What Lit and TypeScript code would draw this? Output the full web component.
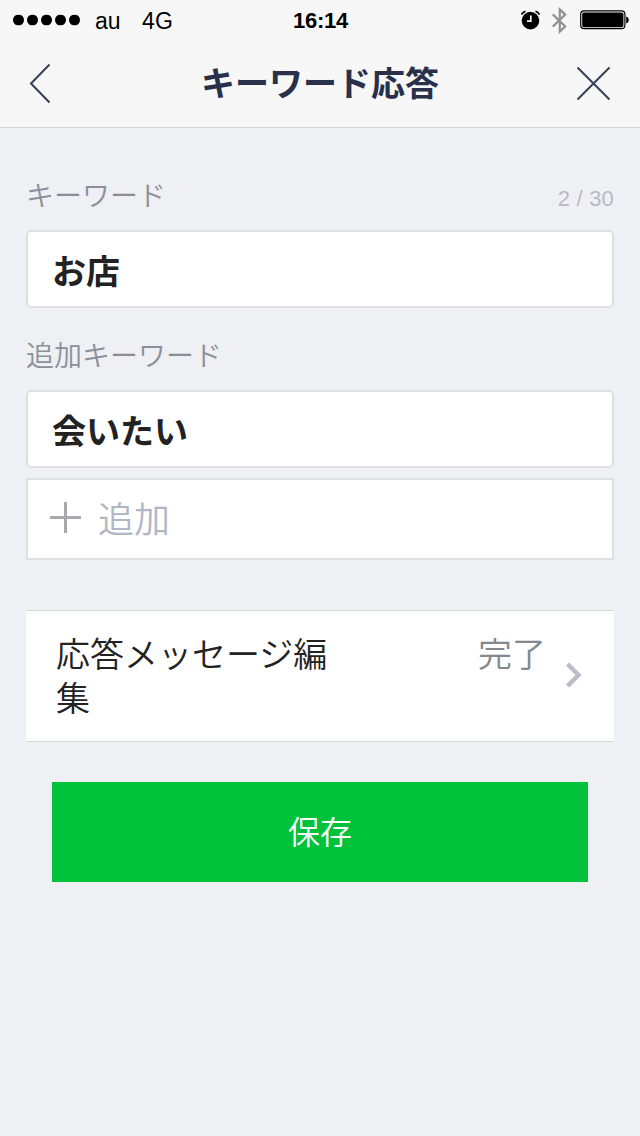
import { LitElement, html, css } from "lit";
import { customElement, property, state } from "lit/decorators.js";

@customElement("status-bar")
class StatusBar extends LitElement {
  static styles = css`
    :host {
      display: grid;
      grid-template-columns: 1fr auto 1fr;
      align-items: center;
      height: 40px;
      padding: 0 11px 0 12px;
      color: #000;
      font-size: 23px;
      line-height: 42px;
    }
    .left { display: flex; align-items: center; }
    .dots { display: block; width: 70px; height: 14px; margin-right: 13px; }
    .carrier { width: 47px; height: 40px; }
    .network { height: 40px; letter-spacing: 0.3px; }
    .time { font-weight: 700; font-size: 22px; letter-spacing: -0.3px; height: 40px; }
    .right { display: flex; justify-content: flex-end; align-items: center; }
    .right svg { display: block; }
    .alarm { margin-right: 11px; }
    .bluetooth { margin-right: 12px; }
  `;
  render() {
    return html`
      <div class="left">
        <svg class="dots" viewBox="0 0 70 14">
          ${[6.5, 20.5, 34.5, 48.5, 62.5].map(
            (x) => html`<svg x=${x - 5.5} y="1.5" width="11" height="11"><circle cx="5.5" cy="5.5" r="5.5" /></svg>`
          )}
        </svg>
        <span class="carrier">au</span>
        <span class="network">4G</span>
      </div>
      <div class="time">16:14</div>
      <div class="right">
        <svg class="alarm" width="19" height="20" viewBox="0 0 19 20">
          <circle cx="9.5" cy="10.6" r="8.8" />
          <path d="M.5 4.6A7 7 0 0 1 4.5 1.2M18.5 4.6A7 7 0 0 0 14.5 1.2" fill="none" stroke="#000" stroke-width="1.6" />
          <path d="M9.8 5.4v5.8H6" fill="none" stroke="#f7f7f7" stroke-width="1.7" />
        </svg>
        <svg class="bluetooth" width="17" height="27" viewBox="0 0 17 27">
          <path d="M1.8 7.4L14.2 19.4 8.8 24.6V2.4L14.2 7.6 1.8 19.6" fill="none" stroke="#929292" stroke-width="2.2" />
        </svg>
        <svg width="49" height="20" viewBox="0 0 49 20">
          <rect x=".7" y=".9" width="44.2" height="17.8" rx="3.4" fill="#f7f7f7" stroke="#000" stroke-width="1.2" />
          <rect x="2.2" y="2.4" width="41.2" height="14.8" rx="1.8" />
          <path d="M46.2 6.5c3.4.7 3.4 6.1 0 6.8z" />
        </svg>
      </div>
    `;
  }
}

@customElement("nav-header")
class NavHeader extends LitElement {
  @property() heading = "";
  static styles = css`
    :host {
      display: flex;
      justify-content: space-between;
      align-items: center;
      box-sizing: border-box;
      height: 88px;
      padding: 0 28px;
      border-bottom: 1px solid #d3d5d9;
      color: #28304a;
    }
    svg { display: block; fill: none; stroke: #354057; stroke-width: 2; }
    .title { margin: 0; font-size: 34px; font-weight: 700; line-height: 50px; }
  `;
  render() {
    return html`
      <svg width="36" height="42" viewBox="0 0 36 42"><path d="M21.5 1.5L3 20.5l18.5 19" /></svg>
      <h1 class="title">${this.heading}</h1>
      <svg width="36" height="36" viewBox="0 0 36 36"><path d="M1.5 1.5l32 32M33.5 1.5l-32 32" /></svg>
    `;
  }
}

@customElement("app-root")
class AppRoot extends LitElement {
  @state() private keyword = "お店";
  @state() private extras = ["会いたい"];
  private limit = 30;

  static styles = css`
    :host {
      display: block;
      box-sizing: border-box;
      min-height: 1136px;
      background: #eff0f4;
      font-family: "Liberation Sans", "Noto Sans CJK JP", sans-serif;
    }
    .top { background: #f7f7f7; }
    .form { padding: 0 26px; }
    .label-row {
      display: flex;
      justify-content: space-between;
      height: 102px;
      box-sizing: border-box;
      padding-top: 46px;
    }
    .label-row.second { height: 82px; padding-top: 26px; }
    .label { padding-top: 2px; font-size: 28px; font-weight: 350; line-height: 42px; color: #8b8f9a; }
    .count { font-size: 22px; line-height: 50px; letter-spacing: 0.2px; color: #b7bac8; }
    .field {
      box-sizing: border-box;
      height: 78px;
      padding: 4px 24px 0;
      border: 2px solid #dddfe4;
      border-radius: 5px;
      background: #fff;
      color: #222;
      font-size: 34px;
      font-weight: 700;
      line-height: 72px;
    }
    .add {
      display: flex;
      align-items: center;
      gap: 17px;
      box-sizing: border-box;
      height: 82px;
      margin-top: 10px;
      padding: 0 22px;
      border: 2px solid #dddfe4;
      background: #fff;
      color: #b2b7c5;
      font-size: 36px;
      font-weight: 350;
      line-height: 78px;
    }
    .add-text { padding-top: 3px; height: 77px; }
    .plus { display: block; margin-bottom: 2px; }
    .row {
      display: flex;
      justify-content: space-between;
      box-sizing: border-box;
      height: 132px;
      margin-top: 50px;
      padding: 22px 32px 0 30px;
      border-top: 1px solid #d7d9dc;
      border-bottom: 1px solid #d7d9dc;
      background: #fff;
      font-size: 34px;
      font-weight: 350;
      line-height: 44px;
    }
    .row-title { width: 280px; color: #222; }
    .row-end { display: flex; color: #85888f; }
    .chevron { display: block; margin: 29px 0 0 19px; }
    .save {
      display: block;
      width: 536px;
      height: 100px;
      margin: 40px auto 0;
      padding: 0 0 4px;
      border: 0;
      background: #00c23b;
      color: #fff;
      font: 350 32px/96px "Noto Sans CJK JP", sans-serif;
      text-align: center;
    }
  `;

  render() {
    return html`
      <div class="top">
        <status-bar></status-bar>
        <nav-header heading="キーワード応答"></nav-header>
      </div>
      <div class="form">
        <div class="label-row">
          <span class="label">キーワード</span>
          <span class="count">${this.keyword.length} / ${this.limit}</span>
        </div>
        <div class="field">${this.keyword}</div>
        <div class="label-row second"><span class="label">追加キーワード</span></div>
        ${this.extras.map((text) => html`<div class="field">${text}</div>`)}
        <div class="add">
          <svg class="plus" width="31" height="32" viewBox="0 0 31 32">
            <path d="M0 15.5h31M15.5 0v31" stroke="#a7a9ae" stroke-width="3" />
          </svg>
          <span class="add-text">追加</span>
        </div>
        <div class="row">
          <span class="row-title">応答メッセージ編集</span>
          <div class="row-end">
            <span>完了</span>
            <svg class="chevron" width="17" height="26" viewBox="0 0 17 26">
              <path d="M2.5 2l11 11-11 11" fill="none" stroke="#bbbdc7" stroke-width="4.5" />
            </svg>
          </div>
        </div>
        <button class="save">保存</button>
      </div>
    `;
  }
}
